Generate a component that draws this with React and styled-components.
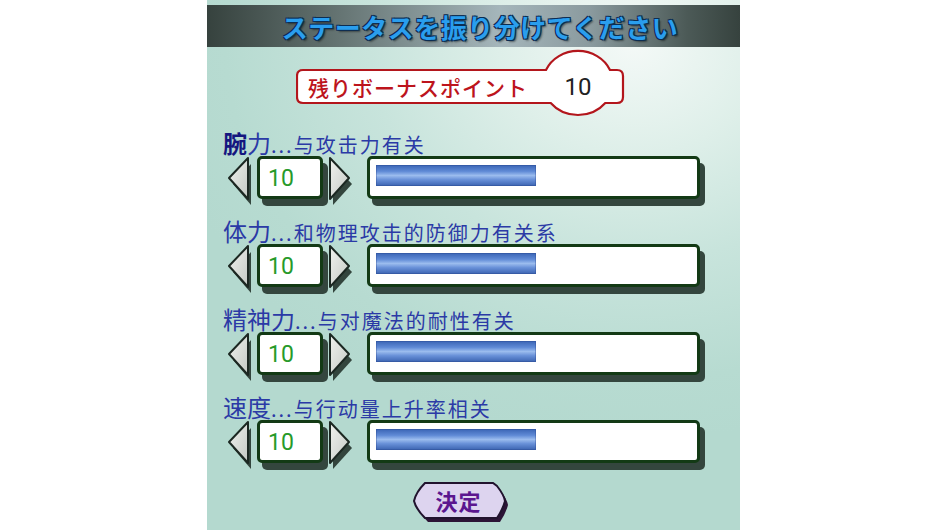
import React from 'react';
import styled, { createGlobalStyle } from 'styled-components';

const GlobalStyle = createGlobalStyle`
    html, body {
        margin: 0;
        padding: 0;
        background: #ffffff;
    }
    body {
        font-family: "Noto Sans CJK JP", "Noto Sans", sans-serif;
    }
`;

const Page = styled.div`
    display: flex;
    justify-content: center;
    width: 947px;
    height: 532px;
`;

const Panel = styled.div`
    width: 533px;
    height: 530px;
    box-sizing: border-box;
    padding-top: 5px;
    display: flex;
    flex-direction: column;
    background: radial-gradient(ellipse 90% 75% at 80% 8%, #f4f9f7 0%, #deefe9 28%, #c8e4dc 55%, #b7dbd1 85%, #b4d9cf 100%);
`;

const Header = styled.h1`
    margin: 0;
    height: 42px;
    padding-left: 13px;
    display: flex;
    align-items: center;
    justify-content: center;
    background: linear-gradient(90deg, #36423e 0%, #5f6e6c 22%, #a5b6bb 55%, #8a9a9e 72%, #4c5a57 90%, #36423e 100%);
    font: 700 26px "Noto Sans CJK JP", sans-serif;
    letter-spacing: 0.5px;
    color: #2a9eee;
    text-shadow:
        -1px -1px 0 #0c2d52,
        1px -1px 0 #0c2d52,
        -1px 1px 0 #0c2d52,
        1px 1px 0 #0c2d52,
        2px 2px 2px rgba(0, 0, 0, 0.45);
`;

const Badge = styled.div`
    position: relative;
    width: 330px;
    height: 68px;
    margin: 2px 0 0 89px;
    padding-top: 7px;
    box-sizing: border-box;
    display: flex;
    align-items: center;
`;

const BadgeFrame = styled.svg`
    position: absolute;
    inset: 0;
`;

const BadgeLabel = styled.span`
    position: relative;
    margin-left: 12px;
    font-size: 21px;
    font-weight: 500;
    letter-spacing: 1px;
    color: #bd141c;
`;

const BadgeValue = styled.span`
    position: relative;
    margin: 0 13px 0 auto;
    width: 70px;
    text-align: center;
    font: 24px Roboto, "Noto Sans", sans-serif;
    color: #222222;
`;

const StatList = styled.div`
    margin-top: 13px;
    padding-left: 16px;
    display: flex;
    flex-direction: column;
    gap: 19px;
`;

const Stat = styled.div`
    display: flex;
    flex-direction: column;
`;

const StatLabel = styled.div`
    height: 26px;
    line-height: 26px;
    white-space: nowrap;
    color: #2b3aa6;
    font-family: "Noto Sans CJK SC", sans-serif;
`;

const StatName = styled.span`
    font-size: 24px;
`;

const Strong = styled.b`
    font-weight: 700;
    color: #15167f;
`;

const StatNote = styled.span`
    font-size: 20px;
    letter-spacing: 2px;
`;

const Controls = styled.div`
    display: flex;
    align-items: flex-start;
    height: 43px;
    margin-left: 4px;
`;

const Arrow = styled.svg`
    flex: none;
    width: 24px;
    height: 50px;
    margin-right: ${props => props.gap}px;
`;

const NumberBox = styled.div`
    flex: none;
    width: 66px;
    height: 43px;
    box-sizing: border-box;
    border: 3px solid #133a15;
    border-radius: 5px;
    background: #ffffff;
    box-shadow: 5px 7px 0 #34463e;
    padding: 2px 0 0 8px;
    margin-right: 6px;
    font: 23px/36px Roboto, "Noto Sans", sans-serif;
    color: #279a2a;
`;

const BarBox = styled.div`
    flex: none;
    width: 333px;
    height: 43px;
    box-sizing: border-box;
    border: 3px solid #133a15;
    border-radius: 5px;
    background: #ffffff;
    box-shadow: 5px 7px 0 #34463e;
    padding: 6px;
`;

const BarFill = styled.div`
    height: 21px;
    background: linear-gradient(180deg, #3a64b4 0%, #5f8ad6 30%, #9bbcee 50%, #6890d8 70%, #3b63b0 100%);
    box-shadow: inset 0 0 0 1px rgba(40, 70, 140, 0.35);
`;

const Footer = styled.div`
    margin-top: 17px;
    padding-left: 204px;
`;

const DecideButton = styled.button`
    position: relative;
    width: 98px;
    height: 44px;
    padding: 0 3px 4px 0;
    border: 0;
    background: none;
    cursor: pointer;
    font: 700 22px "Noto Sans CJK JP", sans-serif;
    color: #5b168f;
`;

const ButtonShape = styled.svg`
    position: absolute;
    inset: 0;
`;

const ButtonText = styled.span`
    position: relative;
    letter-spacing: 1px;
`;

const stats = [
    { strong: '腕', name: '力', note: '...与攻击力有关', value: 10 },
    { name: '体力', note: '...和物理攻击的防御力有关系', value: 10 },
    { name: '精神力', note: '...与对魔法的耐性有关', value: 10 },
    { name: '速度', note: '...与行动量上升率相关', value: 10 },
];

const ArrowGradient = ({ id }) => (
    <defs>
        <linearGradient id={id} x1="0" y1="0" x2="1" y2="1">
            <stop offset="0" stopColor="#f0f2ee" />
            <stop offset="1" stopColor="#c4c9c4" />
        </linearGradient>
    </defs>
);

const LeftArrow = () => (
    <Arrow viewBox="0 0 24 50" gap={6}>
        <ArrowGradient id="arrow-left" />
        <polygon points="24,8 24,49 6,28" fill="#33453d" />
        <polygon points="21,2 21,43 2,22" fill="url(#arrow-left)" stroke="#1c2822" strokeWidth="2" strokeLinejoin="round" />
    </Arrow>
);

const RightArrow = () => (
    <Arrow viewBox="0 0 24 50" gap={14}>
        <ArrowGradient id="arrow-right" />
        <polygon points="4,8 4,49 23,28" fill="#33453d" />
        <polygon points="1,2 1,43 20,22" fill="url(#arrow-right)" stroke="#1c2822" strokeWidth="2" strokeLinejoin="round" />
    </Arrow>
);

const StatRow = ({ stat }) => (
    <Stat>
        <StatLabel>
            <StatName>
                {stat.strong && <Strong>{stat.strong}</Strong>}
                {stat.name}
            </StatName>
            <StatNote>{stat.note}</StatNote>
        </StatLabel>
        <Controls>
            <LeftArrow />
            <NumberBox>{stat.value}</NumberBox>
            <RightArrow />
            <BarBox>
                <BarFill style={{ width: `${stat.value * 16}px` }} />
            </BarBox>
        </Controls>
    </Stat>
);

const App = () => (
    <Page>
        <GlobalStyle />
        <Panel>
            <Header>ステータスを振り分けてください</Header>

            <Badge>
                <BadgeFrame viewBox="0 0 330 68">
                    <path
                        d="M7 21 H250 A35 32 0 0 1 314 21 H321 Q327 21 327 27 V48 Q327 54 321 54 H309.3 A35 32 0 0 1 254.7 54 H7 Q1 54 1 48 V27 Q1 21 7 21 Z"
                        fill="#ffffff"
                        stroke="#b3161c"
                        strokeWidth="2.2"
                    />
                </BadgeFrame>
                <BadgeLabel>残りボーナスポイント</BadgeLabel>
                <BadgeValue>10</BadgeValue>
            </Badge>

            <StatList>
                {stats.map(stat => (
                    <StatRow key={stat.name} stat={stat} />
                ))}
            </StatList>

            <Footer>
                <DecideButton>
                    <ButtonShape viewBox="0 0 98 44">
                        <path d="M17 7 H85 L89 10 Q96 19 97 25 Q95 33 89 42 H17 Q8 33 6 25 Q8 16 17 7 Z" fill="#2c1436" />
                        <path d="M14 3 H82 L86 6 Q93 15 94 21 Q92 29 86 38 H14 Q5 29 3 21 Q5 12 14 3 Z" fill="#ddd4ef" stroke="#21132e" strokeWidth="2" />
                    </ButtonShape>
                    <ButtonText>決定</ButtonText>
                </DecideButton>
            </Footer>
        </Panel>
    </Page>
);

export default App;
